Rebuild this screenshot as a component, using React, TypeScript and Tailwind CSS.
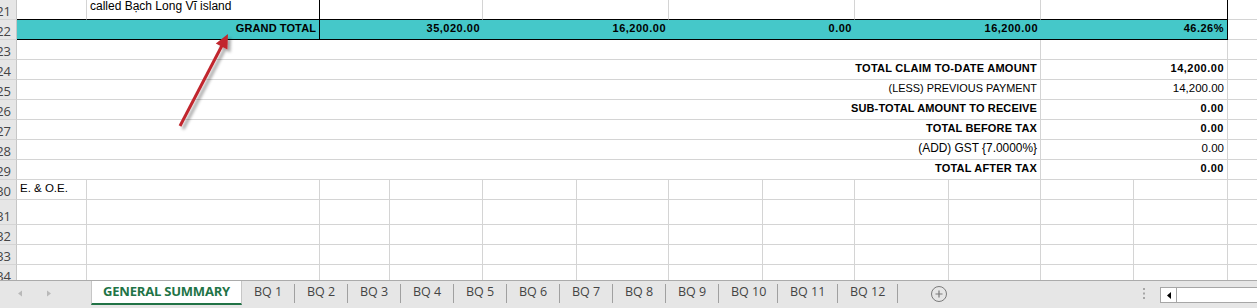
import React from "react";

const COLS = [
  "w-[70px]",
  "w-[233px]",
  "w-[70px]",
  "w-[93px]",
  "w-[94px]",
  "w-[92px]",
  "w-[94px]",
  "w-[92px]",
  "w-[94px]",
  "w-[92px]",
  "w-[93px]",
  "w-[94px]",
];

function Hdr({ n }: { n: number }) {
  return (
    <div className="w-[17px] shrink-0 flex items-end justify-end overflow-hidden bg-[#e6e6e6] border-r border-b border-r-[#c6c6c6] border-b-[#d4d4d4] pr-[5px] font-['Open_Sans',sans-serif] text-[13px] leading-[16px] text-[#444]">
      <span className="shrink-0">{n}</span>
    </div>
  );
}

function C({ w, cls = "", children }: { w: string; cls?: string; children?: React.ReactNode }) {
  return (
    <div className={`shrink-0 flex items-end pb-[4px] px-[3px] leading-[13px] whitespace-nowrap overflow-visible ${w} ${cls}`}>
      {children}
    </div>
  );
}

const summary: [string, string, string, string][] = [
  ["TOTAL CLAIM TO-DATE AMOUNT", "14,200.00", "font-bold text-[11px] tracking-[0.25px]", "font-bold text-[11px] tracking-[0.5px]"],
  ["(LESS) PREVIOUS PAYMENT", "14,200.00", "text-[10.9px]", "text-[11.5px]"],
  ["SUB-TOTAL AMOUNT TO RECEIVE", "0.00", "font-bold text-[11px] tracking-[0.12px]", "font-bold text-[11px] tracking-[0.5px]"],
  ["TOTAL BEFORE TAX", "0.00", "font-bold text-[11px] tracking-[0.15px]", "font-bold text-[11px] tracking-[0.5px]"],
  ["(ADD) GST {7.0000%}", "0.00", "text-[11.9px]", "text-[11.5px]"],
  ["TOTAL AFTER TAX", "0.00", "font-bold text-[11px] tracking-[0.2px]", "font-bold text-[11px] tracking-[0.5px]"],
];

function PlainRow({ n, h, first }: { n: number; h: string; first?: string }) {
  return (
    <div className={`flex shrink-0 ${h}`}>
      <Hdr n={n} />
      {COLS.map((w, i) => (
        <C key={i} w={w} cls="border-r border-b border-[#d4d4d4] text-[11.5px]">
          {i === 0 ? first : null}
        </C>
      ))}
      <div className="flex-1 border-b border-[#d4d4d4]" />
    </div>
  );
}

const tabs: [string, string][] = [
  ["BQ 1", "w-[52px]"],
  ["BQ 2", "w-[52px]"],
  ["BQ 3", "w-[52px]"],
  ["BQ 4", "w-[52px]"],
  ["BQ 5", "w-[52px]"],
  ["BQ 6", "w-[52px]"],
  ["BQ 7", "w-[52px]"],
  ["BQ 8", "w-[52px]"],
  ["BQ 9", "w-[52px]"],
  ["BQ 10", "w-[58px]"],
  ["BQ 11", "w-[59px]"],
  ["BQ 12", "w-[59px]"],
];

export default function App() {
  return (
    <div className="w-[1257px] h-[308px] overflow-hidden bg-white flex flex-col font-['Liberation_Sans',Arial,sans-serif] text-black">
      <div className="relative h-[280px] shrink-0 overflow-hidden flex flex-col">
        {/* Row 21 */}
        <div className="flex shrink-0 h-[20px]">
          <Hdr n={21} />
          <div className="w-[70px] shrink-0 border-r border-r-[#d4d4d4] border-b border-b-black" />
          <div className="w-[233px] shrink-0 border-r border-b border-black px-[3px] text-[12px] leading-[13px] whitespace-nowrap">
            called Bạch Long Vĩ island
          </div>
          <div className="w-[163px] shrink-0 border-r border-r-[#d4d4d4] border-b border-b-black" />
          <div className="w-[186px] shrink-0 border-r border-r-[#d4d4d4] border-b border-b-black" />
          <div className="w-[186px] shrink-0 border-r border-r-[#d4d4d4] border-b border-b-black" />
          <div className="w-[186px] shrink-0 border-r border-r-[#d4d4d4] border-b border-b-black" />
          <div className="w-[187px] shrink-0 border-r border-b border-black" />
          <div className="flex-1 border-b border-[#d4d4d4]" />
        </div>
        {/* Row 22 */}
        <div className="flex shrink-0 h-[20px]">
          <Hdr n={22} />
          <C w="w-[303px]" cls="justify-end bg-[#45c8c9] border-r border-b border-black font-bold text-[11px] tracking-[0.1px]">
            GRAND TOTAL
          </C>
          <C w="w-[163px]" cls="justify-end bg-[#45c8c9] border-b border-black font-bold text-[11px] tracking-[0.5px]">
            35,020.00
          </C>
          <C w="w-[186px]" cls="justify-end bg-[#45c8c9] border-b border-black font-bold text-[11px] tracking-[0.5px]">
            16,200.00
          </C>
          <C w="w-[186px]" cls="justify-end bg-[#45c8c9] border-b border-black font-bold text-[11px] tracking-[0.5px]">
            0.00
          </C>
          <C w="w-[186px]" cls="justify-end bg-[#45c8c9] border-b border-black font-bold text-[11px] tracking-[0.5px]">
            16,200.00
          </C>
          <C w="w-[187px]" cls="justify-end bg-[#45c8c9] border-r border-b border-black font-bold text-[11px] tracking-[0.5px]">
            46.26%
          </C>
          <div className="flex-1 border-b border-[#d4d4d4]" />
        </div>
        {/* Row 23 */}
        <div className="flex shrink-0 h-[20px]">
          <Hdr n={23} />
          <C w="w-[1024px]" cls="border-r border-b border-[#d4d4d4]" />
          <C w="w-[187px]" cls="border-r border-b border-[#d4d4d4]" />
          <div className="flex-1 border-b border-[#d4d4d4]" />
        </div>
        {summary.map(([label, val, lc, vc], i) => (
          <div key={label} className="flex shrink-0 h-[20px]">
            <Hdr n={24 + i} />
            <C w="w-[1024px]" cls={`justify-end border-r border-b border-[#d4d4d4] ${lc}`}>
              {label}
            </C>
            <C w="w-[187px]" cls={`justify-end border-r border-b border-[#d4d4d4] ${vc}`}>
              {val}
            </C>
            <div className="flex-1 border-b border-[#d4d4d4]" />
          </div>
        ))}
        <PlainRow n={30} h="h-[20px]" first="E. & O.E." />
        <PlainRow n={31} h="h-[25px]" />
        <PlainRow n={32} h="h-[20px]" />
        <PlainRow n={33} h="h-[20px]" />
        <PlainRow n={34} h="h-[20px]" />

        {/* red annotation arrow */}
        <svg className="absolute left-0 top-0 pointer-events-none" width="300" height="140" viewBox="0 0 300 140">
          <defs>
            <filter id="sh" x="-30%" y="-30%" width="160%" height="160%">
              <feDropShadow dx="3" dy="3" stdDeviation="1.6" floodColor="#000" floodOpacity="0.35" />
            </filter>
          </defs>
          <g filter="url(#sh)">
            <line x1="180" y1="126" x2="222" y2="45.5" stroke="#c1272d" strokeWidth="3" strokeLinecap="butt" />
            <polygon points="228,34 227.4,49.5 215.8,43.5" fill="#c1272d" />
          </g>
        </svg>
      </div>

      {/* sheet tab bar */}
      <div className="h-[28px] shrink-0 border-t border-[#ababab] bg-[#e6e6e6] flex items-start font-['Open_Sans',sans-serif]">
        <div className="w-[91px] h-[27px] shrink-0">
          <svg width="91" height="27" viewBox="0 0 91 27">
            <polygon points="22,9.5 22,15.5 18,12.5" fill="#b9b9b9" />
            <polygon points="47,9.5 47,15.5 51,12.5" fill="#b9b9b9" />
          </svg>
        </div>
        <div className="w-[151px] h-[24px] shrink-0 bg-white border-l border-r border-[#c6c6c6] border-b-2 border-b-[#217346] flex justify-center pt-[2px]">
          <span className="text-[13px] leading-[16px] font-bold tracking-[-0.2px] text-[#217346]">GENERAL SUMMARY</span>
        </div>
        {tabs.map(([t, w]) => (
          <React.Fragment key={t}>
            <div className={`${w} h-[27px] shrink-0 pl-[12px] pt-[3px] text-[12.5px] leading-[16px] text-[#444] whitespace-nowrap`}>{t}</div>
            <div className="w-px h-[19px] mt-[3px] shrink-0 bg-[#a0a0a0]" />
          </React.Fragment>
        ))}
        <div className="ml-[33px] mt-[5px] w-[16px] h-[16px] shrink-0">
          <svg width="16" height="16" viewBox="0 0 16 16">
            <circle cx="8" cy="8" r="7.5" fill="none" stroke="#7a7a7a" strokeWidth="1" />
            <path d="M8 4.5v7M4.5 8h7" stroke="#7a7a7a" strokeWidth="1.2" />
          </svg>
        </div>
        <div className="ml-[196px] mt-[7px] w-[2px] h-[11px] shrink-0">
          <svg width="2" height="11" viewBox="0 0 2 11">
            <rect x="0" y="0" width="2" height="2" fill="#a6a6a6" />
            <rect x="0" y="4.5" width="2" height="2" fill="#a6a6a6" />
            <rect x="0" y="9" width="2" height="2" fill="#a6a6a6" />
          </svg>
        </div>
        <div className="ml-[15px] mt-[6px] w-[120px] h-[16px] shrink-0 bg-white border border-[#a6a6a6] flex">
          <div className="w-[16px] h-full border-r border-[#a6a6a6] flex items-center justify-center">
            <svg width="4" height="7" viewBox="0 0 4 7">
              <polygon points="4,0 4,7 0,3.5" fill="#000" />
            </svg>
          </div>
        </div>
      </div>
    </div>
  );
}
